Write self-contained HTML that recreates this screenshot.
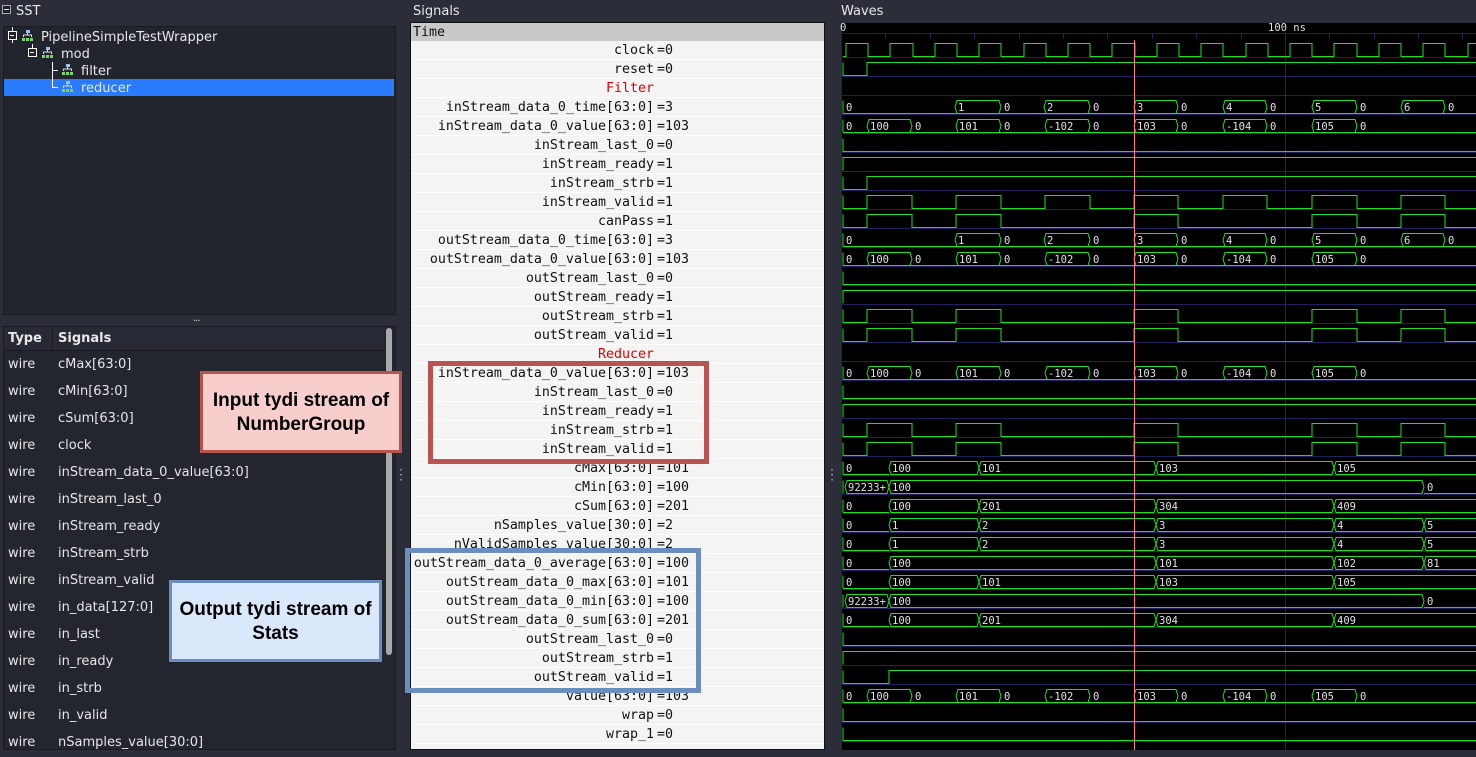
<!DOCTYPE html>
<html><head><meta charset="utf-8"><style>
*{margin:0;padding:0;box-sizing:border-box}
body{width:1476px;height:750px;overflow:hidden;background:#2b2e39;font-family:"DejaVu Sans","Liberation Sans",sans-serif;color:#e6e6e6;position:relative}
.a{position:absolute}
.t{font-size:13px;color:#e8e8e8;white-space:nowrap}
.mono{font-family:"DejaVu Sans Mono","Liberation Mono",monospace;font-size:13.3px;color:#111}
.sr{position:absolute;left:412px;width:412px;height:19px;line-height:20px;border-bottom:1px solid #fff;white-space:nowrap}
.sr .n{position:absolute;right:170px;text-align:right}
.sr .v{position:absolute;left:245px}
.lr{position:absolute;left:4px;width:380px;height:27px;line-height:28px;font-size:13px;white-space:nowrap}
.lr .w{position:absolute;left:4px}
.lr .s{position:absolute;left:54px}
</style></head><body>
<!-- SST -->
<div class="a" style="left:2px;top:5px;width:9px;height:9px;border:1px solid #aaa;background:#1e2029"></div>
<div class="a" style="left:4px;top:9px;width:5px;height:1px;background:#ddd"></div>
<div class="a t" style="left:16px;top:4px">SST</div>
<div class="a" style="left:3px;top:26px;width:393px;height:289px;background:#22242e;border:1px solid #1a1b22"></div>
<div class="a" style="left:4px;top:79px;width:390px;height:17px;background:#2a7bff"></div>
<svg class="a" style="left:0;top:0" width="400" height="100">
<g stroke="#fff" fill="none" stroke-width="1">
<rect x="8.5" y="31.5" width="8" height="8"/><path d="M10 35.5h4M12.5 27v4.5M12.5 39.5V43"/>
<rect x="28.5" y="48.5" width="8" height="8"/><path d="M30 52.5h4M32.5 44v4.5"/>
<path d="M52.5 62v25.5H58M52.5 70.5H58"/>
</g>
<g id="ic"><rect x="26" y="30" width="4" height="3" fill="#9fc3f0"/><path d="M27.5 33v2M23.5 37v-2h8v2" stroke="#ddd" fill="none"/><rect x="22" y="38" width="3" height="3" fill="#7ed36b"/><rect x="26" y="38" width="3" height="3" fill="#7ed36b"/><rect x="30" y="38" width="3" height="3" fill="#7ed36b"/></g>
<use href="#ic" x="20" y="17"/><use href="#ic" x="40" y="34"/><use href="#ic" x="40" y="51"/>
</svg>
<div class="a t" style="left:41px;top:30px">PipelineSimpleTestWrapper</div>
<div class="a t" style="left:61px;top:47px">mod</div>
<div class="a t" style="left:81px;top:64px">filter</div>
<div class="a t" style="left:81px;top:81px">reducer</div>
<div class="a" style="left:193px;top:316px;color:#ccc;font-size:10px;letter-spacing:-1px">···</div>
<!-- Signals list -->
<div class="a" style="left:3px;top:326px;width:393px;height:424px;background:#23252f;border:1px solid #1a1b22"></div>
<div class="a" style="left:4px;top:327px;width:380px;height:24px;background:#272934;border-bottom:1px solid #1a1b22"></div>
<div class="a" style="left:52px;top:327px;width:1px;height:24px;background:#1a1b22"></div>
<div class="a t" style="left:8px;top:331px;font-weight:bold">Type</div>
<div class="a t" style="left:58px;top:331px;font-weight:bold">Signals</div>
<div class="a" style="left:386px;top:328px;width:6px;height:327px;background:#a9a9a9;border-radius:3px"></div>
<div class="lr" style="top:351px"><span class="w">wire</span><span class="s">cMax[63:0]</span></div>
<div class="lr" style="top:378px"><span class="w">wire</span><span class="s">cMin[63:0]</span></div>
<div class="lr" style="top:405px"><span class="w">wire</span><span class="s">cSum[63:0]</span></div>
<div class="lr" style="top:432px"><span class="w">wire</span><span class="s">clock</span></div>
<div class="lr" style="top:459px"><span class="w">wire</span><span class="s">inStream_data_0_value[63:0]</span></div>
<div class="lr" style="top:486px"><span class="w">wire</span><span class="s">inStream_last_0</span></div>
<div class="lr" style="top:513px"><span class="w">wire</span><span class="s">inStream_ready</span></div>
<div class="lr" style="top:540px"><span class="w">wire</span><span class="s">inStream_strb</span></div>
<div class="lr" style="top:567px"><span class="w">wire</span><span class="s">inStream_valid</span></div>
<div class="lr" style="top:594px"><span class="w">wire</span><span class="s">in_data[127:0]</span></div>
<div class="lr" style="top:621px"><span class="w">wire</span><span class="s">in_last</span></div>
<div class="lr" style="top:648px"><span class="w">wire</span><span class="s">in_ready</span></div>
<div class="lr" style="top:675px"><span class="w">wire</span><span class="s">in_strb</span></div>
<div class="lr" style="top:702px"><span class="w">wire</span><span class="s">in_valid</span></div>
<div class="lr" style="top:729px"><span class="w">wire</span><span class="s">nSamples_value[30:0]</span></div>
<div class="a" style="left:398px;top:468px;color:#bbb;font-size:12px;line-height:5px;width:6px;text-align:center">·<br>·<br>·</div>
<!-- Signals pane -->
<div class="a t" style="left:413px;top:4px">Signals</div>
<div class="a" style="left:410px;top:22px;width:415px;height:728px;background:#f4f4f4;border:1px solid #111"></div>
<div class="a mono" style="left:411px;top:23px;width:413px;height:18px;background:#c9c9c9;line-height:20px;padding-left:2px">Time</div>
<div class="mono">
<div class="sr" style="top:41px"><span class="n">clock</span><span class="v">=0</span></div>
<div class="sr" style="top:60px"><span class="n">reset</span><span class="v">=0</span></div>
<div class="sr" style="top:79px"><span class="n" style="color:#e00000">Filter</span></div>
<div class="sr" style="top:98px"><span class="n">inStream_data_0_time[63:0]</span><span class="v">=3</span></div>
<div class="sr" style="top:117px"><span class="n">inStream_data_0_value[63:0]</span><span class="v">=103</span></div>
<div class="sr" style="top:136px"><span class="n">inStream_last_0</span><span class="v">=0</span></div>
<div class="sr" style="top:155px"><span class="n">inStream_ready</span><span class="v">=1</span></div>
<div class="sr" style="top:174px"><span class="n">inStream_strb</span><span class="v">=1</span></div>
<div class="sr" style="top:193px"><span class="n">inStream_valid</span><span class="v">=1</span></div>
<div class="sr" style="top:212px"><span class="n">canPass</span><span class="v">=1</span></div>
<div class="sr" style="top:231px"><span class="n">outStream_data_0_time[63:0]</span><span class="v">=3</span></div>
<div class="sr" style="top:250px"><span class="n">outStream_data_0_value[63:0]</span><span class="v">=103</span></div>
<div class="sr" style="top:269px"><span class="n">outStream_last_0</span><span class="v">=0</span></div>
<div class="sr" style="top:288px"><span class="n">outStream_ready</span><span class="v">=1</span></div>
<div class="sr" style="top:307px"><span class="n">outStream_strb</span><span class="v">=1</span></div>
<div class="sr" style="top:326px"><span class="n">outStream_valid</span><span class="v">=1</span></div>
<div class="sr" style="top:345px"><span class="n" style="color:#e00000">Reducer</span></div>
<div class="sr" style="top:364px"><span class="n">inStream_data_0_value[63:0]</span><span class="v">=103</span></div>
<div class="sr" style="top:383px"><span class="n">inStream_last_0</span><span class="v">=0</span></div>
<div class="sr" style="top:402px"><span class="n">inStream_ready</span><span class="v">=1</span></div>
<div class="sr" style="top:421px"><span class="n">inStream_strb</span><span class="v">=1</span></div>
<div class="sr" style="top:440px"><span class="n">inStream_valid</span><span class="v">=1</span></div>
<div class="sr" style="top:459px"><span class="n">cMax[63:0]</span><span class="v">=101</span></div>
<div class="sr" style="top:478px"><span class="n">cMin[63:0]</span><span class="v">=100</span></div>
<div class="sr" style="top:497px"><span class="n">cSum[63:0]</span><span class="v">=201</span></div>
<div class="sr" style="top:516px"><span class="n">nSamples_value[30:0]</span><span class="v">=2</span></div>
<div class="sr" style="top:535px"><span class="n">nValidSamples_value[30:0]</span><span class="v">=2</span></div>
<div class="sr" style="top:554px"><span class="n">outStream_data_0_average[63:0]</span><span class="v">=100</span></div>
<div class="sr" style="top:573px"><span class="n">outStream_data_0_max[63:0]</span><span class="v">=101</span></div>
<div class="sr" style="top:592px"><span class="n">outStream_data_0_min[63:0]</span><span class="v">=100</span></div>
<div class="sr" style="top:611px"><span class="n">outStream_data_0_sum[63:0]</span><span class="v">=201</span></div>
<div class="sr" style="top:630px"><span class="n">outStream_last_0</span><span class="v">=0</span></div>
<div class="sr" style="top:649px"><span class="n">outStream_strb</span><span class="v">=1</span></div>
<div class="sr" style="top:668px"><span class="n">outStream_valid</span><span class="v">=1</span></div>
<div class="sr" style="top:687px"><span class="n">value[63:0]</span><span class="v">=103</span></div>
<div class="sr" style="top:706px"><span class="n">wrap</span><span class="v">=0</span></div>
<div class="sr" style="top:725px"><span class="n">wrap_1</span><span class="v">=0</span></div>
</div>
<div class="a" style="left:829px;top:468px;color:#bbb;font-size:12px;line-height:5px;width:6px;text-align:center">·<br>·<br>·</div>
<!-- Waves -->
<div class="a t" style="left:841px;top:4px">Waves</div>
<svg class="a" style="left:0;top:0" width="1476" height="750">
<defs>
<pattern id="bl" patternUnits="userSpaceOnUse" x="0" y="57" width="20" height="19"><rect x="0" y="0" width="20" height="1" fill="#20205e"/></pattern>
<g id="T" fill="none" stroke="#1fe01f"><path d="M843,6.5H1476M843,-6.5V6.5"/><polygon points="955,0 957,-6.5 999,-6.5 1001,0 999,6.5 957,6.5"/><polygon points="1044,0 1046,-6.5 1088,-6.5 1090,0 1088,6.5 1046,6.5"/><polygon points="1134,0 1136,-6.5 1176,-6.5 1178,0 1176,6.5 1136,6.5"/><polygon points="1223,0 1225,-6.5 1265,-6.5 1267,0 1265,6.5 1225,6.5"/><polygon points="1312,0 1314,-6.5 1355,-6.5 1357,0 1355,6.5 1314,6.5"/><polygon points="1401,0 1403,-6.5 1443,-6.5 1445,0 1443,6.5 1403,6.5"/></g>
<g id="V" fill="none" stroke="#1fe01f"><path d="M843,6.5H1476M843,-6.5V6.5"/><polygon points="867,0 869,-6.5 910,-6.5 912,0 910,6.5 869,6.5"/><polygon points="956,0 958,-6.5 999,-6.5 1001,0 999,6.5 958,6.5"/><polygon points="1045,0 1047,-6.5 1088,-6.5 1090,0 1088,6.5 1047,6.5"/><polygon points="1134,0 1136,-6.5 1176,-6.5 1178,0 1176,6.5 1136,6.5"/><polygon points="1223,0 1225,-6.5 1265,-6.5 1267,0 1265,6.5 1225,6.5"/><polygon points="1312,0 1314,-6.5 1355,-6.5 1357,0 1355,6.5 1314,6.5"/></g>
<g id="M" fill="none" stroke="#1fe01f"><path d="M843,6.5H889M843,-6.5V6.5"/><polygon points="889,0 891,-6.5 977,-6.5 979,0 977,6.5 891,6.5"/><polygon points="979,0 981,-6.5 1154,-6.5 1156,0 1154,6.5 981,6.5"/><polygon points="1156,0 1158,-6.5 1332,-6.5 1334,0 1332,6.5 1158,6.5"/><path d="M1480,-6.5H1336L1334,0L1336,6.5H1480"/></g>
<g id="N" fill="none" stroke="#1fe01f"><path d="M1424,6.5H1476M843,-6.5V6.5"/><polygon points="845,0 847,-6.5 887,-6.5 889,0 887,6.5 847,6.5"/><polygon points="889,0 891,-6.5 1422,-6.5 1424,0 1422,6.5 891,6.5"/></g>
<g id="S" fill="none" stroke="#1fe01f"><path d="M843,6.5H889M843,-6.5V6.5"/><polygon points="889,0 891,-6.5 977,-6.5 979,0 977,6.5 891,6.5"/><polygon points="979,0 981,-6.5 1154,-6.5 1156,0 1154,6.5 981,6.5"/><polygon points="1156,0 1158,-6.5 1332,-6.5 1334,0 1332,6.5 1158,6.5"/><polygon points="1334,0 1336,-6.5 1422,-6.5 1424,0 1422,6.5 1336,6.5"/><path d="M1480,-6.5H1426L1424,0L1426,6.5H1480"/></g>
<g id="A" fill="none" stroke="#1fe01f"><path d="M843,6.5H889M843,-6.5V6.5"/><polygon points="889,0 891,-6.5 1154,-6.5 1156,0 1154,6.5 891,6.5"/><polygon points="1156,0 1158,-6.5 1332,-6.5 1334,0 1332,6.5 1158,6.5"/><polygon points="1334,0 1336,-6.5 1422,-6.5 1424,0 1422,6.5 1336,6.5"/><path d="M1480,-6.5H1426L1424,0L1426,6.5H1480"/></g>
<path id="C" fill="none" stroke="#1fe01f" d="M843,6.5H846V-6.5H868V6.5H890V-6.5H913V6.5H935V-6.5H957V6.5H979V-6.5H1001V6.5H1024V-6.5H1046V6.5H1068V-6.5H1090V6.5H1112V-6.5H1135V6.5H1157V-6.5H1179V6.5H1201V-6.5H1223V6.5H1246V-6.5H1268V6.5H1290V-6.5H1312V6.5H1334V-6.5H1357V6.5H1379V-6.5H1401V6.5H1423V-6.5H1445V6.5H1468V-6.5H1476"/>
<path id="LO" fill="none" stroke="#1fe01f" d="M843,-6.5V6.5H1476"/>
<path id="HI" fill="none" stroke="#1fe01f" d="M843,6.5V-6.5H1476"/>
<path id="ST" fill="none" stroke="#1fe01f" d="M843,-6.5V6.5H867V-6.5H1476"/>
<path id="VA" fill="none" stroke="#1fe01f" d="M843,-6.5V6.5H867V-6.5H912V6.5H956V-6.5H1001V6.5H1045V-6.5H1090V6.5H1134V-6.5H1178V6.5H1223V-6.5H1267V6.5H1312V-6.5H1357V6.5H1401V-6.5H1445V6.5H1476"/>
<path id="CP" fill="none" stroke="#1fe01f" d="M843,-6.5V6.5H867V-6.5H912V6.5H956V-6.5H1001V6.5H1134V-6.5H1178V6.5H1312V-6.5H1357V6.5H1401V-6.5H1445V6.5H1476"/>
<path id="OV" fill="none" stroke="#1fe01f" d="M843,-6.5V6.5H889V-6.5H1476"/>
</defs>
<rect x="841" y="23" width="635" height="727" fill="#000"/>
<rect x="841" y="57" width="635" height="693" fill="url(#bl)"/>
<path d="M841,33.5H1476M841.5,23V750" stroke="#20205e"/>
<path d="M885.5,33V39M930.5,33V39M974.5,33V39M1019.5,33V39M1063.5,33V39M1107.5,33V39M1152.5,33V39M1196.5,33V39M1241.5,33V39M1285.5,33V750M1329.5,33V39M1374.5,33V39M1418.5,33V39M1462.5,33V39" stroke="#20205e"/>
<g font-family="DejaVu Sans Mono,Liberation Mono,monospace" font-size="10.5" fill="#e0e0e0">
<text x="840" y="31">0</text><text x="1268" y="31">100 ns</text>
</g>
<use href="#C" y="50"/><use href="#ST" y="69"/>
<use href="#T" y="107"/><use href="#V" y="126"/><use href="#LO" y="145"/><use href="#HI" y="164"/><use href="#ST" y="183"/><use href="#VA" y="202"/><use href="#CP" y="221"/>
<use href="#T" y="240"/><use href="#V" y="259"/><use href="#LO" y="278"/><use href="#HI" y="297"/><use href="#CP" y="316"/><use href="#CP" y="335"/>
<use href="#V" y="373"/><use href="#LO" y="392"/><use href="#HI" y="411"/><use href="#CP" y="430"/><use href="#CP" y="449"/>
<use href="#M" y="468"/><use href="#N" y="487"/><use href="#M" y="506"/><use href="#S" y="525"/><use href="#S" y="544"/><use href="#A" y="563"/><use href="#M" y="582"/><use href="#N" y="601"/><use href="#M" y="620"/>
<use href="#LO" y="639"/><use href="#HI" y="658"/><use href="#OV" y="677"/><use href="#V" y="696"/><use href="#LO" y="715"/><use href="#LO" y="734"/>
<g font-family="DejaVu Sans Mono,Liberation Mono,monospace" font-size="10.5" fill="#e0e0e0">
<text y="111"><tspan x="846">0</tspan><tspan x="958">1</tspan><tspan x="1004">0</tspan><tspan x="1047">2</tspan><tspan x="1093">0</tspan><tspan x="1137">3</tspan><tspan x="1181">0</tspan><tspan x="1226">4</tspan><tspan x="1270">0</tspan><tspan x="1315">5</tspan><tspan x="1360">0</tspan><tspan x="1404">6</tspan><tspan x="1448">0</tspan></text>
<text y="244"><tspan x="846">0</tspan><tspan x="958">1</tspan><tspan x="1004">0</tspan><tspan x="1047">2</tspan><tspan x="1093">0</tspan><tspan x="1137">3</tspan><tspan x="1181">0</tspan><tspan x="1226">4</tspan><tspan x="1270">0</tspan><tspan x="1315">5</tspan><tspan x="1360">0</tspan><tspan x="1404">6</tspan><tspan x="1448">0</tspan></text>
<text y="130"><tspan x="846">0</tspan><tspan x="870">100</tspan><tspan x="915">0</tspan><tspan x="959">101</tspan><tspan x="1004">0</tspan><tspan x="1048">-102</tspan><tspan x="1093">0</tspan><tspan x="1137">103</tspan><tspan x="1181">0</tspan><tspan x="1226">-104</tspan><tspan x="1270">0</tspan><tspan x="1315">105</tspan><tspan x="1360">0</tspan></text>
<text y="263"><tspan x="846">0</tspan><tspan x="870">100</tspan><tspan x="915">0</tspan><tspan x="959">101</tspan><tspan x="1004">0</tspan><tspan x="1048">-102</tspan><tspan x="1093">0</tspan><tspan x="1137">103</tspan><tspan x="1181">0</tspan><tspan x="1226">-104</tspan><tspan x="1270">0</tspan><tspan x="1315">105</tspan><tspan x="1360">0</tspan></text>
<text y="377"><tspan x="846">0</tspan><tspan x="870">100</tspan><tspan x="915">0</tspan><tspan x="959">101</tspan><tspan x="1004">0</tspan><tspan x="1048">-102</tspan><tspan x="1093">0</tspan><tspan x="1137">103</tspan><tspan x="1181">0</tspan><tspan x="1226">-104</tspan><tspan x="1270">0</tspan><tspan x="1315">105</tspan><tspan x="1360">0</tspan></text>
<text y="700"><tspan x="846">0</tspan><tspan x="870">100</tspan><tspan x="915">0</tspan><tspan x="959">101</tspan><tspan x="1004">0</tspan><tspan x="1048">-102</tspan><tspan x="1093">0</tspan><tspan x="1137">103</tspan><tspan x="1181">0</tspan><tspan x="1226">-104</tspan><tspan x="1270">0</tspan><tspan x="1315">105</tspan><tspan x="1360">0</tspan></text>
<text y="472"><tspan x="846">0</tspan><tspan x="892">100</tspan><tspan x="982">101</tspan><tspan x="1159">103</tspan><tspan x="1337">105</tspan></text>
<text y="586"><tspan x="846">0</tspan><tspan x="892">100</tspan><tspan x="982">101</tspan><tspan x="1159">103</tspan><tspan x="1337">105</tspan></text>
<text y="491"><tspan x="848">92233+</tspan><tspan x="892">100</tspan><tspan x="1427">0</tspan></text>
<text y="605"><tspan x="848">92233+</tspan><tspan x="892">100</tspan><tspan x="1427">0</tspan></text>
<text y="510"><tspan x="846">0</tspan><tspan x="892">100</tspan><tspan x="982">201</tspan><tspan x="1159">304</tspan><tspan x="1337">409</tspan></text>
<text y="624"><tspan x="846">0</tspan><tspan x="892">100</tspan><tspan x="982">201</tspan><tspan x="1159">304</tspan><tspan x="1337">409</tspan></text>
<text y="529"><tspan x="846">0</tspan><tspan x="892">1</tspan><tspan x="982">2</tspan><tspan x="1159">3</tspan><tspan x="1337">4</tspan><tspan x="1427">5</tspan></text>
<text y="548"><tspan x="846">0</tspan><tspan x="892">1</tspan><tspan x="982">2</tspan><tspan x="1159">3</tspan><tspan x="1337">4</tspan><tspan x="1427">5</tspan></text>
<text y="567"><tspan x="846">0</tspan><tspan x="892">100</tspan><tspan x="1159">101</tspan><tspan x="1337">102</tspan><tspan x="1427">81</tspan></text>
</g>
<path d="M1134.5,40V750" stroke="#ff8080"/>
</svg>
<!-- annotations -->
<div class="a" style="left:428px;top:361px;width:281px;height:103px;border:5px solid #b85450"></div>
<div class="a" style="left:405px;top:548px;width:296px;height:145px;border:5px solid #6c8ebf"></div>
<div class="a" style="left:200px;top:371px;width:202px;height:82px;background:#f8cecc;border:3px solid #b85450;color:#000;font:bold 19px/24px 'Liberation Sans',sans-serif;text-align:center;padding-top:15px">Input tydi stream of NumberGroup</div>
<div class="a" style="left:169px;top:580px;width:213px;height:82px;background:#dae8fc;border:3px solid #6c8ebf;color:#000;font:bold 19px/24px 'Liberation Sans',sans-serif;text-align:center;padding-top:15px">Output tydi stream of Stats</div>
</body></html>
